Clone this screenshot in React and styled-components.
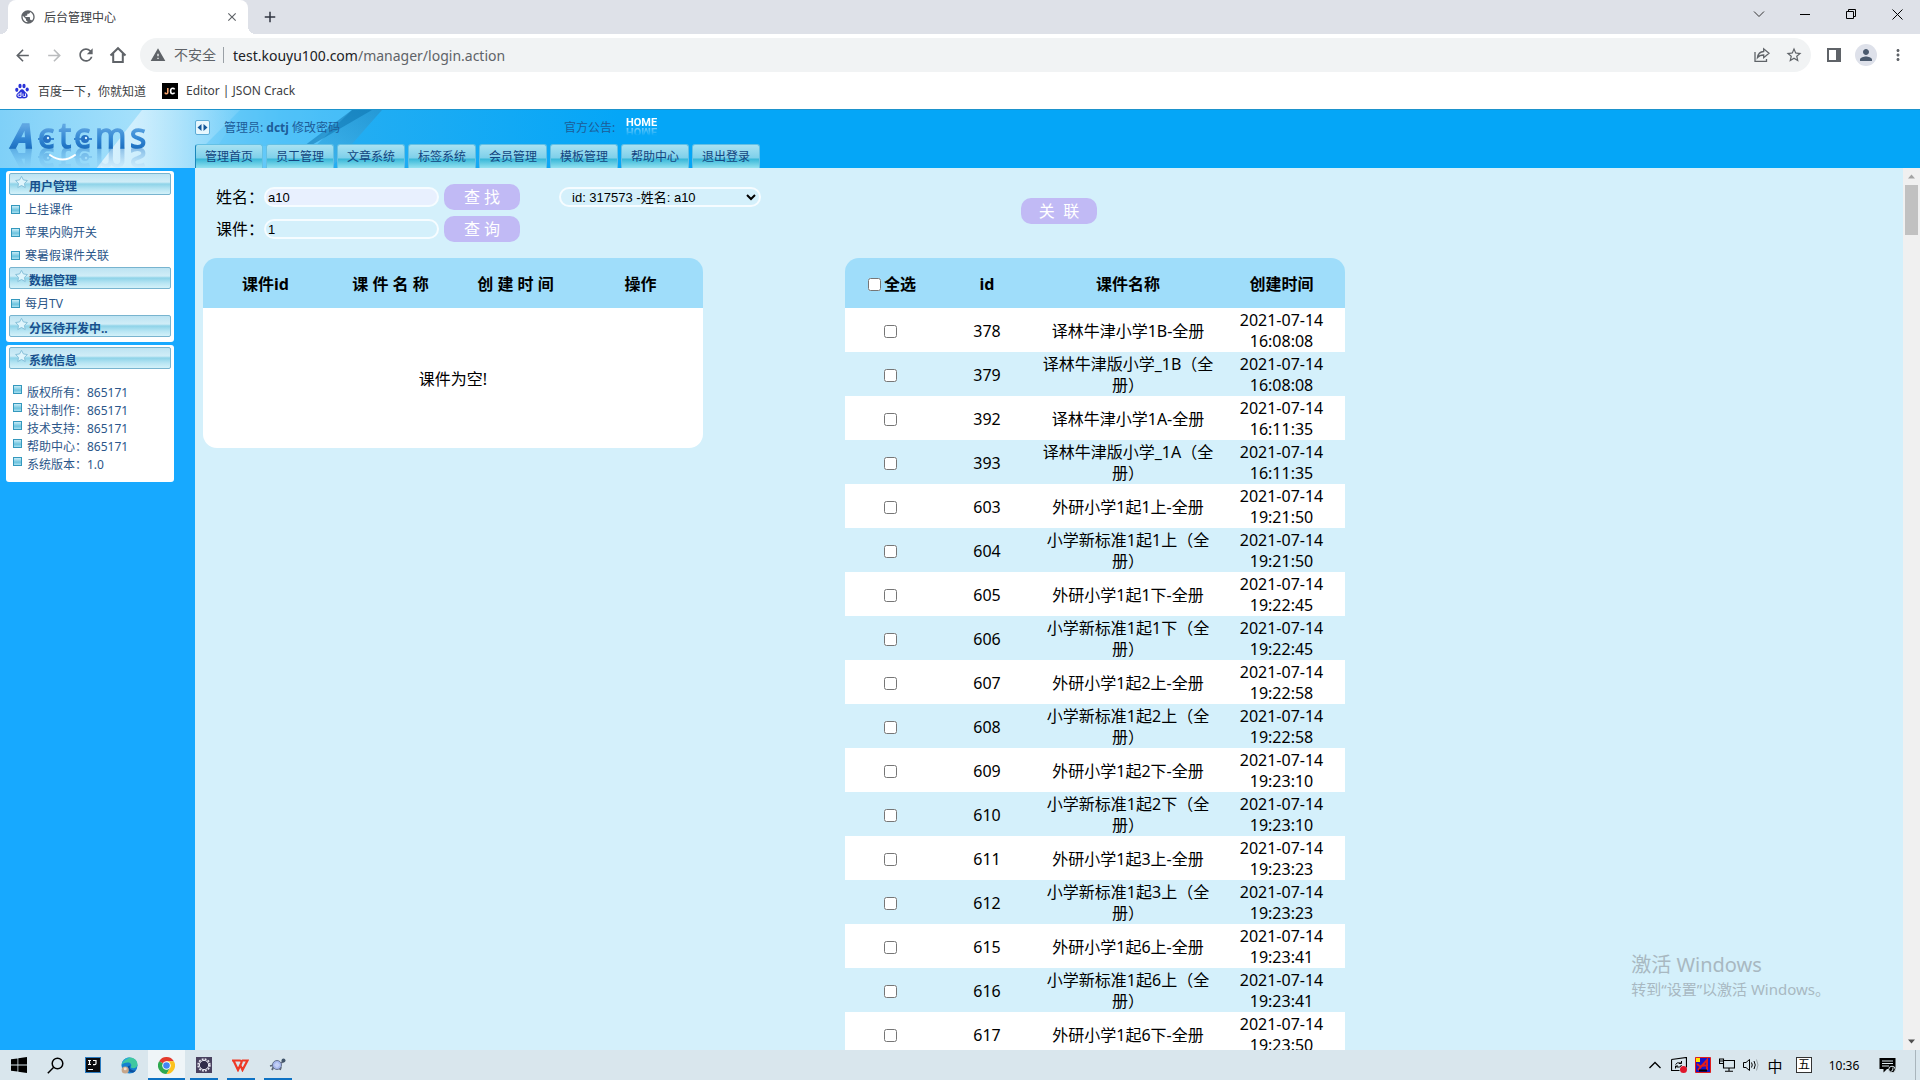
import React, { useState } from "react";
import styled, { createGlobalStyle } from "styled-components";
import {
  MdArrowBack,
  MdArrowForward,
  MdRefresh,
  MdWarning,
  MdStarBorder,
  MdPerson,
  MdMoreVert,
  MdClose,
  MdAdd,
  MdPublic
} from "react-icons/md";

const GlobalStyle = createGlobalStyle`
  * { box-sizing: border-box; }
  body {
    margin: 0;
    font-family: "Noto Sans", "Noto Sans CJK SC", sans-serif;
    font-size: 12px;
    color: #000;
  }
  button { font-family: inherit; padding: 0; border: 0; background: none; color: inherit; }
  a { color: inherit; text-decoration: none; }
  svg { display: block; flex: none; }
`;

const navTabs = [
  "管理首页",
  "员工管理",
  "文章系统",
  "标签系统",
  "会员管理",
  "模板管理",
  "帮助中心",
  "退出登录"
];

const menu = [
  { title: "用户管理", items: ["上挂课件", "苹果内购开关", "寒暑假课件关联"] },
  { title: "数据管理", items: ["每月TV"] },
  { title: "分区待开发中..", items: [] }
];

const systemInfo = [
  "版权所有：865171",
  "设计制作：865171",
  "技术支持：865171",
  "帮助中心：865171",
  "系统版本：1.0"
];

const courses = [
  { id: 378, name: "译林牛津小学1B-全册", time: "16:08:08" },
  { id: 379, name: "译林牛津版小学_1B（全册）", time: "16:08:08" },
  { id: 392, name: "译林牛津小学1A-全册", time: "16:11:35" },
  { id: 393, name: "译林牛津版小学_1A（全册）", time: "16:11:35" },
  { id: 603, name: "外研小学1起1上-全册", time: "19:21:50" },
  { id: 604, name: "小学新标准1起1上（全册）", time: "19:21:50" },
  { id: 605, name: "外研小学1起1下-全册", time: "19:22:45" },
  { id: 606, name: "小学新标准1起1下（全册）", time: "19:22:45" },
  { id: 607, name: "外研小学1起2上-全册", time: "19:22:58" },
  { id: 608, name: "小学新标准1起2上（全册）", time: "19:22:58" },
  { id: 609, name: "外研小学1起2下-全册", time: "19:23:10" },
  { id: 610, name: "小学新标准1起2下（全册）", time: "19:23:10" },
  { id: 611, name: "外研小学1起3上-全册", time: "19:23:23" },
  { id: 612, name: "小学新标准1起3上（全册）", time: "19:23:23" },
  { id: 615, name: "外研小学1起6上-全册", time: "19:23:41" },
  { id: 616, name: "小学新标准1起6上（全册）", time: "19:23:41" },
  { id: 617, name: "外研小学1起6下-全册", time: "19:23:50" }
];

const Screen = styled.div`
  display: flex;
  flex-direction: column;
  height: 100vh;
  overflow: hidden;
`;

/* browser */

const TabStrip = styled.div`
  display: flex;
  height: 34px;
  padding-left: 8px;
  background: #dee1e8;
`;
const BrowserTab = styled.div`
  position: relative;
  display: flex;
  align-items: center;
  gap: 8px;
  width: 240px;
  padding: 0 8px 0 12px;
  border-radius: 8px 8px 0 0;
  background: #fff;
  color: #3c4043;

  &::before,
  &::after {
    content: "";
    position: absolute;
    bottom: 0;
    width: 8px;
    height: 8px;
  }
  &::before {
    left: -8px;
    background: radial-gradient(circle at 0 0, transparent 8px, #fff 8px);
  }
  &::after {
    right: -8px;
    background: radial-gradient(circle at 100% 0, transparent 8px, #fff 8px);
  }
`;
const TabTitle = styled.span`
  flex: 1;
`;
const IconButton = styled.button`
  display: flex;
  align-items: center;
  justify-content: center;
  width: ${props => props.$width || 32}px;
  height: ${props => props.$height || 32}px;
  color: ${props => props.$color || "#5f6368"};
`;
const WindowButtons = styled.div`
  display: flex;
  margin-left: auto;
`;
const Toolbar = styled.div`
  display: flex;
  align-items: center;
  height: 42px;
  padding: 0 6px;
  background: #fff;
`;
const AddressBar = styled.div`
  display: flex;
  flex: 1;
  align-items: center;
  height: 34px;
  margin: 0 7px 0 6px;
  padding: 0 1px 0 10px;
  border-radius: 17px;
  background: #f1f3f4;
  color: #5f6368;
  font-size: 14px;
`;
const NotSecure = styled.span`
  margin-left: 8px;
  padding-right: 7px;
  border-right: 1px solid #9aa0a6;
  line-height: 16px;
`;
const Url = styled.div`
  flex: 1;
  margin-left: 9px;

  b {
    color: #202124;
    font-weight: normal;
  }
`;
const Avatar = styled.span`
  display: flex;
  align-items: center;
  justify-content: center;
  width: 22px;
  height: 22px;
  border-radius: 50%;
  background: #dee1ea;
  color: #4b5a6e;
`;
const Bookmarks = styled.div`
  display: flex;
  align-items: center;
  gap: 16px;
  height: 33px;
  padding: 0 14px 4px;
  background: #fff;
  color: #3c4043;
`;
const Bookmark = styled.a`
  display: flex;
  align-items: center;
  gap: 8px;
`;

/* page header */

const Header = styled.header`
  position: relative;
  display: flex;
  height: 59px;
  border-top: 1px solid #1d93cc;
  background: #05a6f7;
  overflow: hidden;
`;
const HeaderArt = styled.svg`
  position: absolute;
  top: 0;
  left: 0;
`;
const LogoBox = styled.div`
  position: relative;
  width: 195px;
  padding-left: 8px;
`;
const Logo = styled.svg`
  -webkit-box-reflect: below -32px
    linear-gradient(transparent 30%, rgba(0, 0, 0, 0.4) 71%, transparent 72%);
`;
const HeaderMain = styled.div`
  position: relative;
  display: flex;
  flex: 1;
  flex-direction: column;
`;
const AdminBar = styled.div`
  display: grid;
  grid-template-columns: 29px 340px 62px auto;
  align-items: center;
  height: 34px;
  color: #1d5c98;
`;
const Toggle = styled.button`
  display: flex;
  align-items: center;
  justify-content: center;
  width: 15px;
  height: 15px;
  border: 1px solid #5cabd6;
  border-radius: 2px;
  background: #e6f7fe;
`;
const HomeLink = styled.a`
  justify-self: start;
  margin-bottom: 8px;
  color: #fff;
  font: bold 11px/12px "Liberation Sans Narrow", "Roboto", sans-serif;
  -webkit-box-reflect: below -4px linear-gradient(transparent 10%, rgba(0, 0, 0, 0.6));
`;
const Nav = styled.nav`
  display: flex;
  gap: 3px;
  height: 24px;
`;
const NavTab = styled.a`
  width: 68px;
  border: 1px solid #64c0e4;
  border-bottom: 0;
  border-left-color: ${props => (props.$active ? "#1a86bb" : "#64c0e4")};
  border-radius: 3px 3px 0 0;
  background: linear-gradient(#a9e2f2, #7fd0ea 55%, #3bb9d9 62%, #93e1f0);
  color: #134580;
  line-height: 23px;
  text-align: center;
`;

/* sidebar */

const Page = styled.div`
  display: flex;
  flex: 1;
  min-height: 0;
`;
const Sidebar = styled.aside`
  display: flex;
  flex-direction: column;
  gap: 3px;
  width: 195px;
  padding: 3px 21px 0 6px;
  background: #17a9ff;
`;
const Card = styled.section`
  padding: 2px 3px ${props => props.$bottom}px;
  border-radius: 3px;
  background: #fff;
`;
const CardHead = styled.h2`
  display: flex;
  height: 22px;
  margin: 0;
  padding-left: 4px;
  border: 1px solid #78b4cf;
  border-radius: 2px;
  background: linear-gradient(#bce3f2, #d0edf7 40%, #8ed3e8 50%, #b7e5f3 75%, #d3f1f9);
  color: #184f8c;
  font-size: 12px;
  line-height: 26px;
`;
const MenuList = styled.ul`
  margin: 0;
  padding: ${props => (props.$info ? "14px 0 0 4px" : "3px 0 0 2px")};
  list-style: none;
`;
const MenuItem = styled.li`
  display: flex;
  align-items: ${props => (props.$info ? "flex-start" : "center")};
  gap: 5px;
  height: ${props => (props.$info ? 18 : 23)}px;
  color: #2b5689;
  line-height: 20px;
`;
const Bullet = styled.i`
  width: 9px;
  height: 9px;
  margin-top: ${props => (props.$info ? 2 : 0)}px;
  border: 1px solid #3498bd;
  background: linear-gradient(#c8ecf7, #6cc3df 60%, #a9e0f0);
`;

/* content */

const Content = styled.main`
  position: relative;
  flex: 1;
  padding: 16px 0 0 8px;
  overflow: hidden;
  background: #d4f0fb;
  font-size: 16px;
  line-height: 21px;
`;
const Columns = styled.div`
  display: grid;
  grid-template-columns: 500px 500px;
  column-gap: 142px;
  align-items: start;
`;
const Filters = styled.div`
  display: flex;
  flex-direction: column;
  gap: 6px;
  height: 74px;
  padding-left: 13px;
`;
const FilterRow = styled.form`
  display: flex;
  align-items: center;
  width: max-content;
  height: 26px;
`;
const TextField = styled.input`
  width: 175px;
  height: 20px;
  margin-right: 5px;
  padding: 0 2px;
  border: 2px solid #f6fcff;
  border-radius: 10px;
  background: ${props => (props.$filled ? "#e8f0fe" : "transparent")};
  font: 13px "Liberation Sans", "Noto Sans CJK SC", sans-serif;
`;
const StudentSelect = styled.select`
  width: 202px;
  height: 20px;
  margin-left: 39px;
  padding: 0 0 0 7px;
  border: 2px solid #f6fcff;
  border-radius: 10px;
  background-color: transparent;
  color: #000;
  font: 13px "Liberation Sans", "Noto Sans CJK SC", sans-serif;
`;
const ActionButton = styled.button`
  width: 76px;
  height: 26px;
  border-radius: 10px;
  background: #c1baf5;
  color: #fff;
  font-size: 16px;
  line-height: 24px;
  white-space: pre;
`;
const RelateBar = styled.div`
  height: 74px;
  padding: 14px 0 0 176px;
`;
const Table = styled.table`
  width: 100%;
  border-spacing: 0;
  border-radius: ${props => (props.$closed ? "14px" : "14px 14px 0 0")};
  overflow: hidden;
  table-layout: fixed;

  th {
    height: 50px;
    padding: 2px 0 0;
    background: #9fddfa;
    white-space: pre;
  }
  td {
    height: 44px;
    padding: 2px 0 0;
    text-align: center;
  }
  tbody tr:nth-child(odd) {
    background: #fff;
  }
`;
const EmptyCell = styled.td`
  && {
    height: 140px;
  }
`;
const Checkbox = styled.input`
  width: 13px;
  height: 13px;
  margin: 3px;
  vertical-align: -1px;
`;
const Watermark = styled.div`
  position: absolute;
  right: 73px;
  bottom: 50px;
  color: #a8b8c1;
  font-size: 15px;
  line-height: 22px;

  p {
    margin: 0;
  }
  p:first-child {
    font-size: 20px;
    line-height: 26px;
  }
`;
const Scrollbar = styled.div`
  display: flex;
  flex-direction: column;
  align-items: center;
  width: 17px;
  padding: 6px 0;
  background: #f0f0f0;
`;
const ScrollThumb = styled.div`
  width: 13px;
  height: 50px;
  margin: 6px 0 auto;
  background: #c1c1c1;
`;

/* taskbar */

const Taskbar = styled.footer`
  display: flex;
  justify-content: space-between;
  height: 30px;
  background: #d9e6ed;
`;
const TaskGroup = styled.div`
  display: flex;
  align-items: center;
`;
const TaskButton = styled.button`
  display: flex;
  align-items: center;
  justify-content: center;
  width: 37px;
  height: 30px;
  background: ${props => (props.$active ? "#eff5f8" : "none")};
  background-image: ${props =>
    props.$open ? "linear-gradient(#0d72c4, #0d72c4)" : "none"};
  background-position: bottom;
  background-repeat: no-repeat;
  background-size: ${props => (props.$active ? 37 : 28)}px 2px;
`;
const TrayButton = styled.button`
  display: flex;
  align-items: center;
  justify-content: center;
  width: ${props => props.$width || 24}px;
  height: 30px;
  color: #000;
  font-size: ${props => props.$size || 12}px;
`;
const ImeBadge = styled.span`
  width: 16px;
  height: 16px;
  border: 1px solid #333;
  background: #fff;
  line-height: 14px;
`;
const DesktopEdge = styled.div`
  width: 5px;
  height: 30px;
  margin-left: 8px;
  border-left: 1px solid #a9b5bc;
`;

function HomeIcon() {
  return (
    <svg width="18" height="18" viewBox="0 0 18 18" fill="none" stroke="#5f6368" strokeWidth="2">
      <path d="M1.5 9.5 9 2.2l7.500 7.300M4.200 7.500V16h9.600V7.500" />
    </svg>
  );
}

function ShareIcon() {
  return (
    <svg width="16" height="16" viewBox="0 0 16 16" fill="none" stroke="#5f6368" strokeWidth="1.300">
      <path d="M1 5v9.300h11.500V12" />
      <path d="M3.500 10.500c.6-4 3-5.800 6.200-6V1.800L15 6.300l-5.300 4.400V8c-2.700 0-4.600.6-6.200 2.500Z" />
    </svg>
  );
}

function BaiduIcon() {
  return (
    <svg width="16" height="16" viewBox="0 0 16 16" fill="#2a32d8">
      <ellipse cx="2.800" cy="6.800" rx="1.600" ry="2.100" />
      <ellipse cx="6" cy="3" rx="1.600" ry="2.200" />
      <ellipse cx="10" cy="3" rx="1.600" ry="2.200" />
      <ellipse cx="13.200" cy="6.500" rx="1.600" ry="2.100" />
      <path d="M8 6.200c1.600 0 2.200 1.800 3.500 3 1.500 1.300 2.800 2.600 2 4.500-.8 2-3.300 1.700-5.500 1.600-2.200.1-4.700.4-5.500-1.600-.8-1.900.5-3.200 2-4.500 1.300-1.200 1.900-3 3.500-3Z" />
      <path d="M7 9v4.500H5.200a1.200 1.200 0 0 1 0-2.600H7M9 10.500v2.300q0 .7.8.7H11.500v-3" fill="none" stroke="#fff" strokeWidth=".9" />
    </svg>
  );
}

function JsonCrackIcon() {
  return (
    <svg width="16" height="16" viewBox="0 0 16 16">
      <rect width="16" height="16" fill="#000" />
      <path d="M5.800 5v4.300q0 1.400-1.300 1.400T3 9.500" fill="none" stroke="#f5a36d" strokeWidth="1.600" />
      <path d="M12.600 6.300Q12 5.300 10.700 5.300 8.600 5.300 8.600 8t2.100 2.700q1.300 0 1.900-1" fill="none" stroke="#fff" strokeWidth="1.600" />
    </svg>
  );
}

function StarBadge() {
  return (
    <svg width="15" height="15" viewBox="0 0 15 15">
      <path
        d="m7.500 2.300 1.900 3.600 4 .6-2.900 2.900.7 4.100-3.700-2-3.700 2 .7-4.100-2.900-2.900 4-.6Z"
        fill="#dff5fc"
        stroke="#86c0d9"
      />
    </svg>
  );
}

function ActcmsLogo() {
  return (
    <Logo width="146" height="54" viewBox="0 0 146 54" fontFamily="Open Sans, sans-serif">
      <defs>
        <linearGradient id="ink" x1="0" y1="0" x2="0" y2="1">
          <stop offset="0.300" stopColor="#5fa6e2" />
          <stop offset="0.600" stopColor="#2f84d2" />
          <stop offset="0.900" stopColor="#1163b5" />
        </linearGradient>
      </defs>
      <text y="38" fontSize="34" fill="url(#ink)" stroke="url(#ink)" strokeWidth="1.400">
        <tspan x="4" fontWeight="bold" fontStyle="italic">A</tspan>
        <tspan x="30 51 66 87 122">ctcms</tspan>
      </text>
      <path d="M30 29h16M66 29h18" stroke="#3788d3" strokeWidth="2" />
      <circle cx="39" cy="29" r="4" fill="#2672c4" />
      <circle cx="77" cy="29" r="4" fill="#2672c4" />
      <circle cx="40" cy="28" r="1.200" fill="#d8f0ff" />
      <circle cx="78" cy="28" r="1.200" fill="#d8f0ff" />
      <path d="M42 45q13 9 25 0" fill="none" stroke="#fff" strokeWidth="2" strokeLinecap="round" />
    </Logo>
  );
}

function HeaderBackdrop() {
  return (
    <HeaderArt width="620" height="59" viewBox="0 0 620 59" preserveAspectRatio="none">
      <defs>
        <linearGradient id="sky">
          <stop offset="0" stopColor="#7fd0f8" />
          <stop offset="0.220" stopColor="#a4e0fb" />
          <stop offset="0.450" stopColor="#5bc6f9" />
          <stop offset="1" stopColor="#05a6f7" />
        </linearGradient>
        <linearGradient id="beam" x1="0" y1="0" x2="1" y2="0">
          <stop offset="0" stopColor="#fff" stopOpacity="0.650" />
          <stop offset="1" stopColor="#fff" stopOpacity="0" />
        </linearGradient>
        <linearGradient id="shade" x1="0" y1="1" x2="1" y2="0">
          <stop offset="0" stopColor="#38b4ee" />
          <stop offset="1" stopColor="#0b79b8" />
        </linearGradient>
        <linearGradient id="glow">
          <stop offset="0" stopColor="#25aef2" />
          <stop offset="1" stopColor="#05a6f7" />
        </linearGradient>
      </defs>
      <path d="M0 0h620v59H0Z" fill="url(#sky)" />
      <path d="M142 0h100l-40 59H96Z" fill="url(#beam)" />
      <path d="M240 0h112l-44 36H204Z" fill="#3db9f5" opacity="0.300" />
      <path d="M352 0h60l-60 59h-60Z" fill="url(#shade)" opacity="0.600" />
      <path d="M352 0h20l-62 36h-6Z" fill="#0a70ac" opacity="0.500" />
      <path d="M382 0h238v59H330Z" fill="url(#glow)" />
    </HeaderArt>
  );
}

function WindowsIcon() {
  return (
    <svg width="16" height="16" viewBox="0 0 16 16" fill="#000">
      <path d="M0 2.300 6.500 1.400v6.200H0ZM7.300 1.300 16 0v7.600H7.300ZM0 8.400h6.500v6.200L0 13.700ZM7.300 8.400H16V16l-8.700-1.300Z" />
    </svg>
  );
}

function SearchIcon() {
  return (
    <svg width="17" height="17" viewBox="0 0 17 17" fill="none" stroke="#000" strokeWidth="1.500">
      <circle cx="10.500" cy="6.500" r="5.300" />
      <path d="M6.700 10.300.8 16.200" />
    </svg>
  );
}

function IdeaIcon() {
  return (
    <svg width="16" height="16" viewBox="0 0 16 16">
      <rect width="16" height="16" fill="#2a7bc0" />
      <path d="M1 1h14v14H1Z" fill="#0c0c10" />
      <path d="M3 3.500h3M4.500 3.500v4M3 7.500h3M8 3.500h3v3q0 1.200-1.300 1.200H8M3 12.500h5" stroke="#fff" fill="none" strokeWidth="1.200" />
    </svg>
  );
}

function EdgeIcon() {
  return (
    <svg width="17" height="17" viewBox="0 0 17 17">
      <circle cx="8.500" cy="8.500" r="8" fill="#1580cf" />
      <path d="M.6 8C1 3.500 4.500.5 8.700.5c4.600 0 7.800 3.200 7.800 6.800 0 2.600-2 4-4.200 4-2 0-2.900-.8-2.300-1.700C11 7.500 9.500 5.400 6.800 5.400 4 5.400 1.300 6.500.6 8Z" fill="#3fc8a0" />
      <path d="M.6 8C1 3.500 4.500.5 8.700.5 6 2.500 2.500 3.500.6 8Z" fill="#28a9d9" />
      <path d="M9.500 8.500c-2 2.700.5 5.500 5.500 5l-2.500 2C8 16 6 12 7.200 9Z" fill="#0c4f9f" />
      <circle cx="4.200" cy="13" r="3.600" fill="#c7a68a" />
      <circle cx="4.200" cy="11.800" r="1.500" fill="#f3dfcf" />
    </svg>
  );
}

function ChromeIcon() {
  return (
    <svg width="17" height="17" viewBox="0 0 16 16">
      <path d="M8 8 1.070 4A8 8 0 0 1 14.930 4H8Z" fill="#e33b2e" />
      <path d="M8 8 1.070 4A8 8 0 0 0 8 16l3.500-6Z" fill="#2da94f" />
      <path d="M8 4h6.930A8 8 0 0 1 8 16l3.500-6Z" fill="#fcc31e" />
      <circle cx="8" cy="8" r="4" fill="#fff" />
      <circle cx="8" cy="8" r="3.100" fill="#4285f4" />
    </svg>
  );
}

function GearIcon() {
  return (
    <svg width="16" height="16" viewBox="0 0 16 16">
      <rect width="16" height="16" fill="#49415f" />
      <circle cx="8" cy="8" r="5.800" fill="none" stroke="#e8e6f0" strokeWidth="1.800" strokeDasharray="1.800 1.240" />
      <circle cx="8" cy="8" r="4.600" fill="#322b49" stroke="#e8e6f0" />
    </svg>
  );
}

function WpsIcon() {
  return (
    <svg width="17" height="14" viewBox="0 0 17 14" fill="none" stroke="#ee3a26" strokeWidth="2.200">
      <path d="M0 2.500h7.500q3 0 1.800 2.500L6 12 1.500 2.500M8 6.500l2.500 5.500L15.500 2.500H10" />
    </svg>
  );
}

function TurtleIcon() {
  return (
    <svg width="17" height="16" viewBox="0 0 17 16">
      <path d="m3 13 2-4M11 13l1-3M1 9l4-1M12 6l3-2" stroke="#5b6577" strokeWidth="1.800" />
      <circle cx="8" cy="8" r="4.500" fill="#a7b8ee" stroke="#66738f" />
      <circle cx="14.500" cy="3.500" r="2" fill="#42566b" />
      <path d="m5 8 3-3 3 3-3 3Z" fill="#c3cff6" />
    </svg>
  );
}

function BrowserChrome() {
  return (
    <>
      <TabStrip>
        <BrowserTab>
          <MdPublic size={16} color="#5f6368" />
          <TabTitle>后台管理中心</TabTitle>
          <IconButton $width={16} aria-label="关闭标签页">
            <MdClose size={14} />
          </IconButton>
        </BrowserTab>
        <IconButton $width={44} $height={34} $color="#303540" aria-label="新标签页">
          <MdAdd size={18} />
        </IconButton>
        <WindowButtons>
          <IconButton $width={46} $height={28} aria-label="搜索标签页">
            <svg width="12" height="12" viewBox="0 0 12 12" fill="none" stroke="#333">
              <path d="m1 3.500 5 5 5-5" />
            </svg>
          </IconButton>
          <IconButton $width={46} $height={28} aria-label="最小化">
            <svg width="10" height="10" viewBox="0 0 10 10" stroke="#000">
              <path d="M0 5.500h10" />
            </svg>
          </IconButton>
          <IconButton $width={46} $height={28} aria-label="还原">
            <svg width="10" height="10" viewBox="0 0 10 10" stroke="#000" fill="none">
              <path d="M.5 2.500h7v7h-7ZM2.500 2.500v-2h7v7h-2" />
            </svg>
          </IconButton>
          <IconButton $width={46} $height={28} aria-label="关闭">
            <svg width="11" height="11" viewBox="0 0 11 11" stroke="#000">
              <path d="m.5.5 10 10M10.500.5l-10 10" />
            </svg>
          </IconButton>
        </WindowButtons>
      </TabStrip>
      <Toolbar>
        <IconButton aria-label="后退">
          <MdArrowBack size={19} />
        </IconButton>
        <IconButton $color="#babcbe" aria-label="前进">
          <MdArrowForward size={19} />
        </IconButton>
        <IconButton aria-label="刷新">
          <MdRefresh size={20} />
        </IconButton>
        <IconButton aria-label="主页">
          <HomeIcon />
        </IconButton>
        <AddressBar>
          <MdWarning size={16} />
          <NotSecure>不安全</NotSecure>
          <Url>
            <b>test.kouyu100.com</b>/manager/login.action
          </Url>
          <IconButton aria-label="分享">
            <ShareIcon />
          </IconButton>
          <IconButton aria-label="收藏">
            <MdStarBorder size={18} />
          </IconButton>
        </AddressBar>
        <IconButton aria-label="侧边栏">
          <svg width="14" height="14" viewBox="0 0 14 14">
            <path d="M0 0h14v14H0Z" fill="#5f6368" />
            <path d="M2 2h7v10H2Z" fill="#fff" />
          </svg>
        </IconButton>
        <IconButton aria-label="个人资料">
          <Avatar>
            <MdPerson size={18} />
          </Avatar>
        </IconButton>
        <IconButton aria-label="菜单">
          <MdMoreVert size={18} />
        </IconButton>
      </Toolbar>
      <Bookmarks>
        <Bookmark href="#baidu">
          <BaiduIcon />
          百度一下，你就知道
        </Bookmark>
        <Bookmark href="#jsoncrack">
          <JsonCrackIcon />
          Editor | JSON Crack
        </Bookmark>
      </Bookmarks>
    </>
  );
}

function SideMenu() {
  return (
    <Sidebar>
      <Card $bottom={5}>
        {menu.map(group => (
          <React.Fragment key={group.title}>
            <CardHead>
              <StarBadge />
              {group.title}
            </CardHead>
            {group.items.length > 0 && (
              <MenuList>
                {group.items.map(item => (
                  <MenuItem key={item}>
                    <Bullet />
                    <a href="#menu">{item}</a>
                  </MenuItem>
                ))}
              </MenuList>
            )}
          </React.Fragment>
        ))}
      </Card>
      <Card $bottom={9}>
        <CardHead>
          <StarBadge />
          系统信息
        </CardHead>
        <MenuList $info>
          {systemInfo.map(line => (
            <MenuItem $info key={line}>
              <Bullet $info />
              {line}
            </MenuItem>
          ))}
        </MenuList>
      </Card>
    </Sidebar>
  );
}

function CourseTable() {
  const [checked, setChecked] = useState([]);

  const toggle = id => {
    setChecked(
      checked.includes(id) ? checked.filter(c => c !== id) : [...checked, id]
    );
  };

  const toggleAll = event => {
    setChecked(event.target.checked ? courses.map(c => c.id) : []);
  };

  return (
    <Table>
      <colgroup>
        <col width="91" />
        <col width="102" />
        <col width="180" />
        <col width="127" />
      </colgroup>
      <thead>
        <tr>
          <th>
            <label>
              <Checkbox
                type="checkbox"
                checked={checked.length === courses.length}
                onChange={toggleAll}
              />
              全选
            </label>
          </th>
          <th>id</th>
          <th>课件名称</th>
          <th>创建时间</th>
        </tr>
      </thead>
      <tbody>
        {courses.map(course => (
          <tr key={course.id}>
            <td>
              <Checkbox
                type="checkbox"
                aria-label={String(course.id)}
                checked={checked.includes(course.id)}
                onChange={() => toggle(course.id)}
              />
            </td>
            <td>{course.id}</td>
            <td>{course.name}</td>
            <td>
              2021-07-14
              <br />
              {course.time}
            </td>
          </tr>
        ))}
      </tbody>
    </Table>
  );
}

function App() {
  const [name, setName] = useState("a10");
  const [course, setCourse] = useState("1");

  return (
    <Screen>
      <GlobalStyle />
      <BrowserChrome />
      <Header>
        <HeaderBackdrop />
        <LogoBox>
          <ActcmsLogo />
        </LogoBox>
        <HeaderMain>
          <AdminBar>
            <Toggle aria-label="收起菜单">
              <svg width="11" height="7" viewBox="0 0 11 7" fill="#12579a">
                <path d="M4.500 0v7L.5 3.500ZM6.500 0v7l4-3.500Z" />
              </svg>
            </Toggle>
            <span>
              管理员: <b>dctj</b> <a href="#password">修改密码</a>
            </span>
            <span>官方公告:</span>
            <HomeLink href="#home">HOME</HomeLink>
          </AdminBar>
          <Nav>
            {navTabs.map((tab, index) => (
              <NavTab href="#nav" key={tab} $active={index === 0}>
                {tab}
              </NavTab>
            ))}
          </Nav>
        </HeaderMain>
      </Header>
      <Page>
        <SideMenu />
        <Content>
          <Columns>
            <div>
              <Filters>
                <FilterRow onSubmit={e => e.preventDefault()}>
                  <label htmlFor="name">姓名：</label>
                  <TextField
                    id="name"
                    $filled
                    value={name}
                    onChange={e => setName(e.target.value)}
                  />
                  <ActionButton>查 找</ActionButton>
                  <StudentSelect aria-label="学生">
                    <option>id: 317573 -姓名: a10</option>
                  </StudentSelect>
                </FilterRow>
                <FilterRow onSubmit={e => e.preventDefault()}>
                  <label htmlFor="course">课件：</label>
                  <TextField
                    id="course"
                    value={course}
                    onChange={e => setCourse(e.target.value)}
                  />
                  <ActionButton>查 询</ActionButton>
                </FilterRow>
              </Filters>
              <Table $closed>
                <thead>
                  <tr>
                    <th>课件id</th>
                    <th>课 件 名 称</th>
                    <th>创 建 时 间</th>
                    <th>操作</th>
                  </tr>
                </thead>
                <tbody>
                  <tr>
                    <EmptyCell colSpan={4}>课件为空!</EmptyCell>
                  </tr>
                </tbody>
              </Table>
            </div>
            <div>
              <RelateBar>
                <ActionButton>关{"  "}联</ActionButton>
              </RelateBar>
              <CourseTable />
            </div>
          </Columns>
          <Watermark>
            <p>激活 Windows</p>
            <p>转到“设置”以激活 Windows。</p>
          </Watermark>
        </Content>
        <Scrollbar>
          <svg width="7" height="5" viewBox="0 0 7 5" fill="#a3a3a3">
            <path d="M3.500.5 7 4.500H0Z" />
          </svg>
          <ScrollThumb />
          <svg width="7" height="5" viewBox="0 0 7 5" fill="#505050">
            <path d="M0 .5h7l-3.500 4Z" />
          </svg>
        </Scrollbar>
      </Page>
      <Taskbar>
        <TaskGroup>
          <TaskButton aria-label="开始"><WindowsIcon /></TaskButton>
          <TaskButton aria-label="搜索"><SearchIcon /></TaskButton>
          <TaskButton aria-label="IDEA"><IdeaIcon /></TaskButton>
          <TaskButton aria-label="Edge"><EdgeIcon /></TaskButton>
          <TaskButton aria-label="Chrome" $active $open><ChromeIcon /></TaskButton>
          <TaskButton aria-label="Eclipse" $open><GearIcon /></TaskButton>
          <TaskButton aria-label="WPS" $open><WpsIcon /></TaskButton>
          <TaskButton aria-label="TortoiseSVN" $open><TurtleIcon /></TaskButton>
        </TaskGroup>
        <TaskGroup>
          <TrayButton aria-label="隐藏的图标">
            <svg width="12" height="8" viewBox="0 0 12 8" fill="none" stroke="#000" strokeWidth="1.300">
              <path d="m.5 7 5.500-5.500L11.500 7" />
            </svg>
          </TrayButton>
          <TrayButton aria-label="同步">
            <svg width="16" height="16" viewBox="0 0 16 16" fill="none" stroke="#000">
              <path d="M.5 2.500 15.500.5v10M.5 2.500v11h8" strokeWidth="1.200" />
              <path d="M4.500 7.500q1-2.500 5.500-1.500M10.500 4v2.500H8M10.500 8q-1 3-5.500 1.700M4.500 11.500V9H7" />
              <circle cx="12.500" cy="12.500" r="3.500" fill="#e0162b" stroke="none" />
            </svg>
          </TrayButton>
          <TrayButton aria-label="输入工具">
            <svg width="16" height="16" viewBox="0 0 16 16">
              <path d="M.5.500h15v15H.5Z" fill="#1512c8" stroke="#e01c1c" />
              <path d="M1 1h4v4H1Z" fill="#ffe600" />
              <path d="m3 13 9-10v10M6 9l7-1M2 7l4 3" stroke="#e01c1c" strokeWidth="2" fill="none" />
              <path d="M4 13.500h8" stroke="#000" strokeWidth="2" />
            </svg>
          </TrayButton>
          <TrayButton aria-label="网络">
            <svg width="16" height="14" viewBox="0 0 16 14" fill="none" stroke="#000" strokeWidth="1.100">
              <path d="M5 2.500h10.500v7.500H4.500V6M.5 1h4v4.500h-4ZM10 10v3M6 13.300h8M.5 3h4" />
            </svg>
          </TrayButton>
          <TrayButton aria-label="音量">
            <svg width="17" height="14" viewBox="0 0 17 14" fill="none" stroke="#000">
              <path d="M.5 4.500h2.500l3.500-3v11l-3.500-3H.5Z" />
              <path d="M8.500 4.500q1.500 2.500 0 5M11 3q2.500 4 0 8" />
              <path d="M13.500 1.500q3 5.500 0 11" stroke="#9aa5ab" />
            </svg>
          </TrayButton>
          <TrayButton $size={15}>中</TrayButton>
          <TrayButton $width={34}><ImeBadge>五</ImeBadge></TrayButton>
          <TrayButton $width={46}>10:36</TrayButton>
          <TrayButton $width={40} aria-label="通知">
            <svg width="17" height="17" viewBox="0 0 17 17">
              <path d="M.5 1h16v11H8l-3.500 3.500V12h-4Z" fill="#000" />
              <path d="M3 4h11M3 6.500h11M3 9h7" stroke="#dce8ee" />
              <circle cx="13" cy="12.500" r="3.300" fill="#000" stroke="#dce8ee" />
              <path d="M11.500 14.500q3 0 2.500-4" stroke="#dce8ee" fill="none" />
            </svg>
          </TrayButton>
          <DesktopEdge />
        </TaskGroup>
      </Taskbar>
    </Screen>
  );
}

export default App;
